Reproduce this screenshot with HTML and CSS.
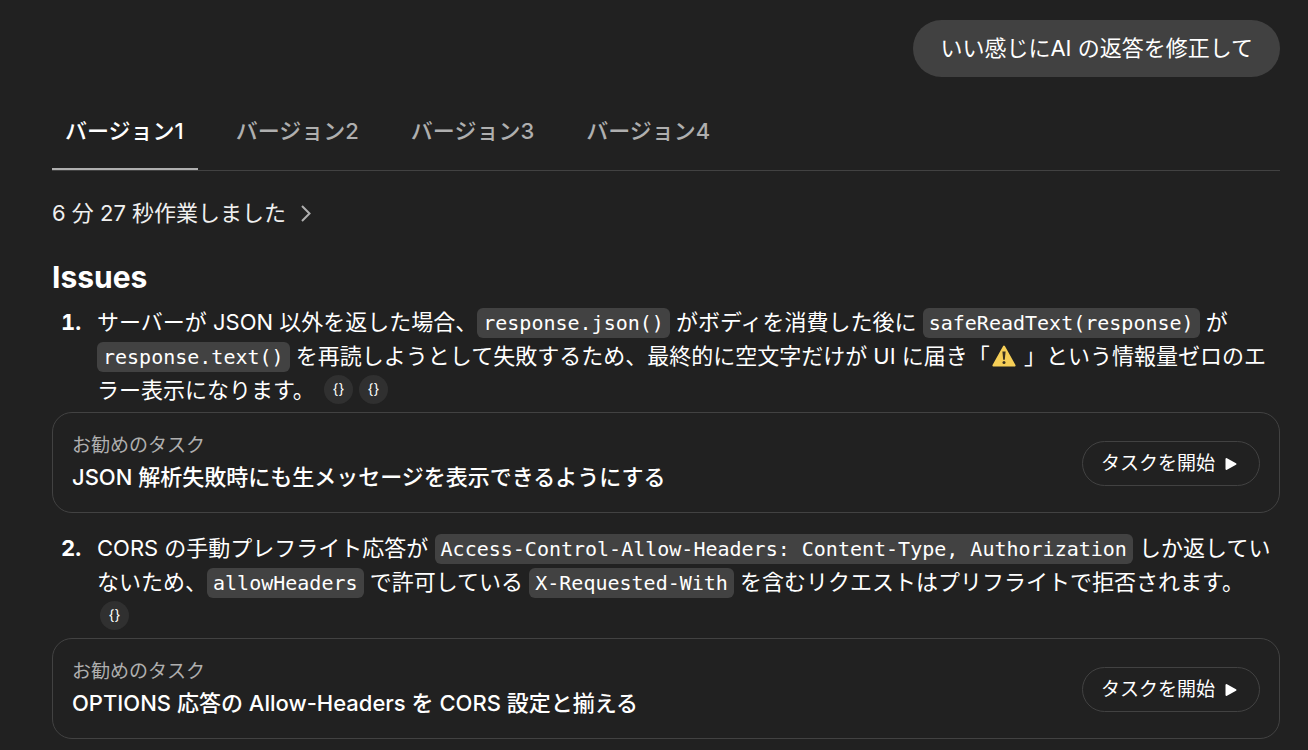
FILE: index.html
```html
<!DOCTYPE html>
<html lang="ja">
<head>
    <meta charset="UTF-8">
    <meta name="viewport" content="width=device-width, initial-scale=1.0">
    <title>バージョン1</title>
    <link rel="stylesheet" href="styles.css">
</head>
<body>
    <main class="chat">
        <div class="user-message">いい感じにAI の返答を修正して</div>

        <!-- Version tabs -->
        <nav class="tabs" role="tablist">
            <button class="tab active" type="button" role="tab" aria-selected="true">バージョン1</button>
            <button class="tab" type="button" role="tab" aria-selected="false">バージョン2</button>
            <button class="tab" type="button" role="tab" aria-selected="false">バージョン3</button>
            <button class="tab" type="button" role="tab" aria-selected="false">バージョン4</button>
        </nav>

        <button class="worked" type="button">
            6 分 27 秒作業しました
            <svg class="chevron" viewBox="0 0 12 20" aria-hidden="true"><path d="M2 3l7.5 7.5L2 18"/></svg>
        </button>

        <h2 class="heading">Issues</h2>

        <ol class="issues">
            <!-- Issue 1 -->
            <li class="issue">
                <div class="issue-row">
                    <p class="issue-text">サーバーが JSON 以外を返した場合、<code>response.json()</code> がボディを消費した後に <code>safeReadText(response)</code> が <code>response.text()</code> を再読しようとして失敗するため、最終的に空文字だけが UI に届き「<svg class="warning" viewBox="0 0 24 22" role="img" aria-label="警告"><path class="warning-body" d="M12 1.6L22.6 20.6H1.4z"/><path class="warning-mark" d="M10.4 6.6h3.2L12.8 14.8h-1.6z"/><circle class="warning-mark" cx="12" cy="17.4" r="1.5"/></svg> 」という情報量ゼロのエラー表示になります。 <button class="chip" type="button">{}</button><button class="chip" type="button">{}</button></p>
                </div>
                <div class="task">
                    <div class="task-info">
                        <div class="task-label">お勧めのタスク</div>
                        <div class="task-title">JSON 解析失敗時にも生メッセージを表示できるようにする</div>
                    </div>
                    <button class="start" type="button">
                        タスクを開始
                        <svg class="play" viewBox="0 0 12 14" aria-hidden="true"><path d="M1.5 2v10L10.5 7z"/></svg>
                    </button>
                </div>
            </li>

            <!-- Issue 2 -->
            <li class="issue">
                <div class="issue-row">
                    <p class="issue-text">CORS の手動プレフライト応答が <code>Access-Control-Allow-Headers: Content-Type, Authorization</code> しか返していないため、<code>allowHeaders</code> で許可している <code>X-Requested-With</code> を含むリクエストはプリフライトで拒否されます。 <button class="chip" type="button">{}</button></p>
                </div>
                <div class="task">
                    <div class="task-info">
                        <div class="task-label">お勧めのタスク</div>
                        <div class="task-title">OPTIONS 応答の Allow-Headers を CORS 設定と揃える</div>
                    </div>
                    <button class="start" type="button">
                        タスクを開始
                        <svg class="play" viewBox="0 0 12 14" aria-hidden="true"><path d="M1.5 2v10L10.5 7z"/></svg>
                    </button>
                </div>
            </li>
        </ol>
    </main>
</body>
</html>
```

FILE: styles.css
```css
* {
    box-sizing: border-box;
}
body {
    margin: 0;
    background: #212121;
    color: #fff;
    font-family: Inter, "Noto Sans CJK JP", sans-serif;
    font-size: 22px;
    line-height: 34px;
}
button {
    margin: 0;
    padding: 0;
    border: 0;
    background: none;
    color: inherit;
    font: inherit;
    cursor: pointer;
}
.chat {
    display: flex;
    flex-direction: column;
    padding: 20px 28px 10px 52px;
}

.user-message {
    align-self: flex-end;
    padding: 11px 27px 12px;
    border-radius: 29px;
    background: #414141;
}

/* Tabs */
.tabs {
    display: flex;
    gap: 25px;
    margin-top: 24px;
    border-bottom: 1px solid #424242;
}
.tab {
    padding: 13px 14px 20px 13px;
    border-bottom: 2px solid transparent;
    color: #afafaf;
    font-weight: 500;
}
.tab.active {
    border-bottom-color: #afafaf;
    color: #fff;
}

.worked {
    display: flex;
    align-items: center;
    align-self: flex-start;
    gap: 14px;
    margin-top: 25px;
    color: #f0f0f0;
}
.chevron {
    width: 12px;
    height: 20px;
    fill: none;
    stroke: #afafaf;
    stroke-width: 2;
}

.heading {
    margin: 27px 0 8px;
    font-size: 30px;
    font-weight: 700;
    line-height: 40px;
}

/* Issue list */
.issues {
    margin: 0;
    padding: 0;
    list-style: none;
    counter-reset: issue;
}
.issue {
    counter-increment: issue;
}
.issue + .issue {
    margin-top: 18px;
}
.issue-row {
    display: grid;
    grid-template-columns: 36px 1fr;
    padding-left: 9px;
}
.issue-row::before {
    content: counter(issue) ".";
    font-weight: 700;
    font-variant-numeric: tabular-nums;
}
.issue-text {
    margin: 0;
}
.issue-text code {
    padding: 3px 6px;
    border-radius: 6px;
    background: #424242;
    font-family: "DejaVu Sans Mono", monospace;
    font-size: 20px;
    line-height: 24px;
}
.warning {
    width: 24px;
    height: 22px;
    margin: 0 2px;
    vertical-align: -3px;
}
.warning-body {
    fill: #f6cf57;
    stroke: #f6cf57;
    stroke-width: 2;
    stroke-linejoin: round;
}
.warning-mark {
    fill: #3b3220;
}
.chip {
    width: 29px;
    height: 29px;
    margin: 0 3px;
    border-radius: 50%;
    background: #303030;
    font-size: 14px;
    line-height: 28px;
    vertical-align: 4px;
}

/* Suggested task card */
.task {
    display: flex;
    align-items: center;
    justify-content: space-between;
    margin-top: 5px;
    padding: 19px 19px 18px;
    border: 1px solid #424242;
    border-radius: 20px;
}
.task-label {
    color: #afafaf;
    font-size: 19px;
    line-height: 28px;
}
.task-title {
    font-weight: 500;
}
.start {
    display: flex;
    align-items: center;
    gap: 10px;
    padding: 8px 22px 7px 18px;
    border: 1px solid #424242;
    border-radius: 23px;
    font-size: 19px;
    line-height: 28px;
}
.play {
    width: 12px;
    height: 14px;
    fill: #fff;
    stroke: #fff;
    stroke-width: 2;
    stroke-linejoin: round;
}
```
